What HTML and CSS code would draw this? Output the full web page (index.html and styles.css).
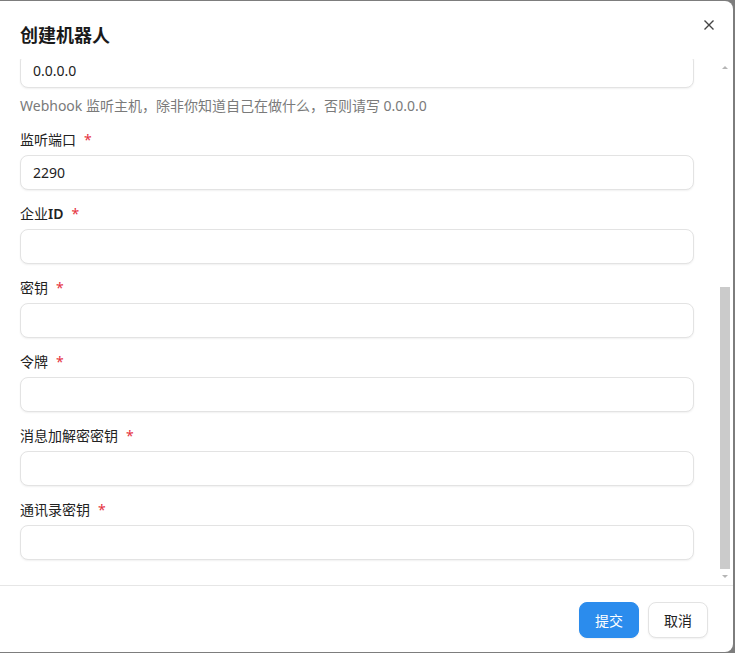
FILE: index.html
```html
<!DOCTYPE html>
<html lang="zh-CN">
<head>
  <meta charset="UTF-8" />
  <title>创建机器人</title>
  <link rel="stylesheet" href="styles.css">
</head>
<body>

  <div class="dialog">
    <!-- Header -->
    <div class="dialog-header">
      <h2 class="dialog-title">创建机器人</h2>
      <button class="close-btn" aria-label="关闭">
        <svg width="12" height="12" viewBox="0 0 12 12">
          <path d="M1.5 1.5 L10.5 10.5 M10.5 1.5 L1.5 10.5" stroke="#444" stroke-width="1.4" fill="none" />
        </svg>
      </button>
    </div>

    <!-- Body: scrolled form + scrollbar -->
    <div class="dialog-body">
      <div class="scroll-view">
        <form class="form">
          <div class="field">
            <input class="input" type="text" value="0.0.0.0" />
            <p class="hint">Webhook 监听主机，除非你知道自己在做什么，否则请写 0.0.0.0</p>
          </div>

          <div class="field">
            <label class="label">监听端口<span class="req">*</span></label>
            <input class="input" type="text" value="2290" />
          </div>

          <div class="field">
            <label class="label">企业<b>ID</b><span class="req">*</span></label>
            <input class="input" type="text" />
          </div>

          <div class="field">
            <label class="label">密钥<span class="req">*</span></label>
            <input class="input" type="text" />
          </div>

          <div class="field">
            <label class="label">令牌<span class="req">*</span></label>
            <input class="input" type="text" />
          </div>

          <div class="field">
            <label class="label">消息加解密密钥<span class="req">*</span></label>
            <input class="input" type="text" />
          </div>

          <div class="field">
            <label class="label">通讯录密钥<span class="req">*</span></label>
            <input class="input" type="text" />
          </div>
        </form>
      </div>

      <div class="scrollbar">
        <div class="sb-btn"><span class="arrow-up"></span></div>
        <div class="sb-track"></div>
        <div class="sb-thumb"></div>
        <div class="sb-btn"><span class="arrow-down"></span></div>
      </div>
    </div>

    <!-- Footer -->
    <div class="dialog-footer">
      <button class="btn btn-primary">提交</button>
      <button class="btn">取消</button>
    </div>
  </div>

</body>
</html>
```

FILE: styles.css
```css
body {
  margin: 0;
  background: #7d7d7d;
  font-family: "Noto Sans", "Noto Sans CJK SC", sans-serif;
  color: #222;
  overflow: hidden;
}

.dialog {
  position: relative;
  width: 733px;
  height: 651px;
  margin-top: 1px;
  background: #fff;
  border-radius: 0 8px 8px 0;
  display: flex;
  flex-direction: column;
}

.dialog-header {
  height: 58px;
  box-sizing: border-box;
  padding: 22px 20px 0;
}

.dialog-title {
  margin: 0;
  font-size: 18px;
  line-height: 24px;
  font-weight: 700;
  color: #1a1a1a;
}

.close-btn {
  position: absolute;
  top: 18px;
  right: 18px;
  width: 12px;
  height: 12px;
  padding: 0;
  border: none;
  background: none;
  cursor: pointer;
  display: flex;
}

.dialog-body {
  height: 526px;
  display: flex;
}

.scroll-view {
  flex: 1;
  overflow: hidden;
  padding: 0 26px 0 20px;
}

.form {
  margin-top: -6px;
}

.field {
  display: flex;
  flex-direction: column;
  margin-bottom: 13px;
}

.label {
  font-size: 14px;
  line-height: 22px;
  margin-bottom: 4px;
}

.label b {
  font-weight: 600;
}

.req {
  color: #e5323e;
  margin-left: 8px;
}

.input {
  height: 35px;
  box-sizing: border-box;
  border: 1px solid #e3e3e3;
  border-radius: 8px;
  box-shadow: 0 1px 2px rgba(0, 0, 0, 0.06);
  padding: 0 12px;
  font-family: inherit;
  font-size: 14px;
  color: #222;
  outline: none;
}

.hint {
  margin: 8px 0 0;
  font-size: 14px;
  line-height: 20px;
  color: #7a7a7a;
}

.scrollbar {
  width: 10px;
  margin: 1px 3px 2px 0;
  display: flex;
  flex-direction: column;
}

.sb-btn {
  height: 14px;
  display: flex;
  align-items: center;
  justify-content: center;
}

.sb-track { flex: 1; }

.sb-thumb {
  height: 282px;
  background: #cbcbcb;
}

.arrow-up,
.arrow-down {
  width: 0;
  height: 0;
  border-left: 3px solid transparent;
  border-right: 3px solid transparent;
}

.arrow-up { border-bottom: 3px solid #b5b5b5; }
.arrow-down { border-top: 3px solid #b5b5b5; }

.dialog-footer {
  flex: 1;
  border-top: 1px solid #e6e6e6;
  display: flex;
  justify-content: flex-end;
  gap: 9px;
  padding: 16px 25px 0 0;
}

.btn {
  width: 60px;
  height: 36px;
  border: 1px solid #e3e3e3;
  border-radius: 8px;
  background: #fff;
  box-shadow: 0 1px 2px rgba(0, 0, 0, 0.06);
  font-family: inherit;
  font-size: 14px;
  color: #222;
  cursor: pointer;
}

.btn-primary {
  background: #2b8ced;
  border-color: #2b8ced;
  color: #fff;
}
```
